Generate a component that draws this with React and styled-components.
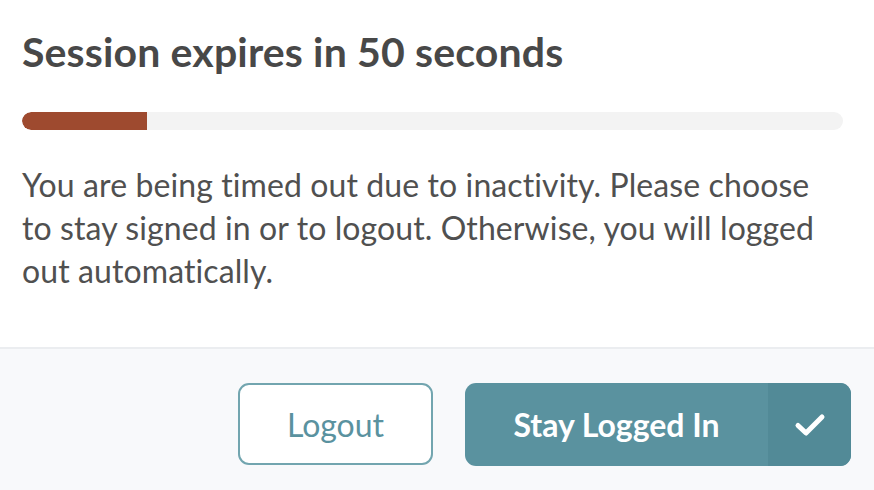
import React from "react";
import styled, { createGlobalStyle } from "styled-components";

const Global = createGlobalStyle`
  html, body { margin: 0; padding: 0; background: #ffffff; }
  body { font-family: Lato, "Open Sans", sans-serif; }
`;

const Dialog = styled.div`
  width: 874px;
  height: 490px;
  display: flex;
  flex-direction: column;
  background: #ffffff;
  overflow: hidden;
`;

const Body = styled.div`
  padding: 27px 31px 0 22px;
  height: 347px;
  box-sizing: border-box;
  display: flex;
  flex-direction: column;
  flex-shrink: 0;
`;

const Title = styled.h1`
  margin: 0;
  font-size: 41px;
  line-height: 50px;
  font-weight: 700;
  color: #484848;
  letter-spacing: 0.15px;
  white-space: nowrap;
`;

const Track = styled.div`
  margin-top: 35px;
  height: 18px;
  border-radius: 9px;
  background: #f3f3f3;
  overflow: hidden;
  flex-shrink: 0;
`;

const Fill = styled.div`
  height: 100%;
  background: #9e4a2f;
  border-radius: 9px 0 0 9px;
`;

const Message = styled.p`
  margin: 33px 0 0;
  font-size: 32px;
  line-height: 43px;
  font-weight: 400;
  color: #505050;
  max-width: 816px;
  letter-spacing: 0.1px;
`;

const Footer = styled.div`
  flex: 1;
  background: #f8f9fb;
  border-top: 2px solid #ebedf0;
  display: flex;
  justify-content: flex-end;
  align-items: flex-start;
  gap: 32px;
  padding: 34px 23px 0 0;
`;

const Outline = styled.button`
  width: 195px;
  height: 82px;
  box-sizing: border-box;
  border: 2px solid #72a5af;
  border-radius: 11px;
  background: #ffffff;
  color: #5a929f;
  font-family: Lato, sans-serif;
  font-size: 32px;
  font-weight: 400;
  cursor: pointer;
`;

const Primary = styled.button`
  width: 386px;
  height: 83px;
  box-sizing: border-box;
  border: none;
  border-radius: 11px;
  background: #5a929f;
  color: #ffffff;
  font-family: Lato, sans-serif;
  font-size: 32px;
  font-weight: 700;
  display: flex;
  padding: 0;
  overflow: hidden;
  cursor: pointer;
`;

const PrimaryLabel = styled.span`
  flex: 1;
  display: flex;
  align-items: center;
  justify-content: center;
`;

const PrimaryIcon = styled.span`
  width: 83px;
  display: flex;
  align-items: center;
  justify-content: center;
  background: #528a97;
`;

export default function App() {
  const progress = 15.2;
  return (
    <>
      <Global />
      <Dialog>
        <Body>
          <Title>Session expires in 50 seconds</Title>
          <Track>
            <Fill style={{ width: `${progress}%` }} />
          </Track>
          <Message>
            You are being timed out due to inactivity. Please choose to stay
            signed in or to logout. Otherwise, you will logged out
            automatically.
          </Message>
        </Body>
        <Footer>
          <Outline>Logout</Outline>
          <Primary>
            <PrimaryLabel>Stay Logged In</PrimaryLabel>
            <PrimaryIcon>
              <svg width="32" height="26" viewBox="0 0 32 26">
                <path
                  d="M4 13.5 L12 21 L28 5"
                  fill="none"
                  stroke="#ffffff"
                  strokeWidth="5"
                  strokeLinecap="round"
                  strokeLinejoin="round"
                />
              </svg>
            </PrimaryIcon>
          </Primary>
        </Footer>
      </Dialog>
    </>
  );
}
